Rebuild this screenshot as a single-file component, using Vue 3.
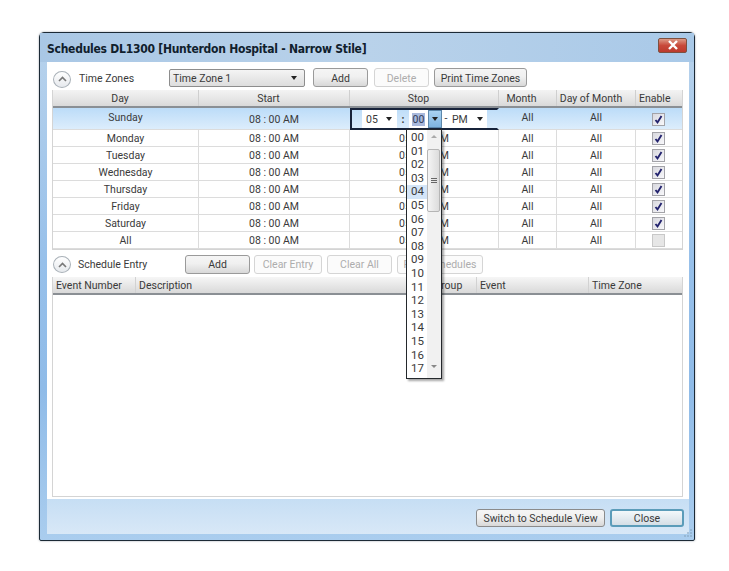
<script setup>
const rows = [
  { day: 'Sunday', on: true, active: true },
  { day: 'Monday', on: true },
  { day: 'Tuesday', on: true },
  { day: 'Wednesday', on: true },
  { day: 'Thursday', on: true },
  { day: 'Friday', on: true },
  { day: 'Saturday', on: true },
  { day: 'All', on: false },
]
const hours = Array.from({ length: 19 }, (_, i) => String(i).padStart(2, '0'))
</script>

<template>
  <div class="page">
    <section class="window">
      <header class="titlebar">
        <h1>Schedules DL1300 [Hunterdon Hospital - Narrow Stile]</h1>
        <button class="close-x" aria-label="Close">
          <svg width="12" height="10" viewBox="0 0 12 10"><path d="M2 1l8 8M10 1l-8 8" stroke="#fff" stroke-width="2.4" fill="none"/></svg>
        </button>
      </header>

      <div class="client">
        <main class="content">
          <div class="toolbar first-bar">
            <span class="expander first"><svg width="9" height="6" viewBox="0 0 9 6"><path d="M1 5l3.5-3.5L8 5" stroke="#777" stroke-width="1.6" fill="none"/></svg></span>
            <span class="section-label tz-label">Time Zones</span>
            <div class="select"><span>Time Zone 1</span><i class="arrow"></i></div>
            <button class="btn tz-add">Add</button>
            <button class="btn tz-delete" disabled>Delete</button>
            <button class="btn tz-print">Print Time Zones</button>
          </div>

          <div class="tz-table">
            <div class="tz-row tz-head">
              <div>Day</div><div>Start</div><div>Stop</div><div>Month</div><div>Day of Month</div><div>Enable</div>
            </div>
            <div v-for="r in rows" :key="r.day" class="tz-row" :class="{ active: r.active }">
              <div class="up">{{ r.day }}</div>
              <div class="time">08 : 00 AM</div>
              <div v-if="r.active" class="editor">
                <span class="ed-part ed-h">05 <i class="arrow"></i></span>
                <span class="ed-colon">:</span>
                <span class="ed-min"><b>00</b></span>
                <span class="ed-btn"><i class="arrow"></i></span>
                <span class="ed-dash">-</span>
                <span class="ed-part ed-pm">PM <i class="arrow"></i></span>
              </div>
              <div v-else class="time">05 : 00 PM</div>
              <div class="up">All</div>
              <div class="up">All</div>
              <div>
                <span class="check" :class="{ off: !r.on }">
                  <svg v-if="r.on" width="9" height="9" viewBox="0 0 9 9"><path d="M1.5 5l2 2.4L7.5 1" stroke="#23236e" stroke-width="1.9" fill="none"/></svg>
                </span>
              </div>
            </div>
          </div>

          <div class="toolbar entry-bar">
            <span class="expander"><svg width="9" height="6" viewBox="0 0 9 6"><path d="M1 5l3.5-3.5L8 5" stroke="#777" stroke-width="1.6" fill="none"/></svg></span>
            <span class="section-label se-label">Schedule Entry</span>
            <button class="btn se-add">Add</button>
            <button class="btn se-clear" disabled>Clear Entry</button>
            <button class="btn se-all" disabled>Clear All</button>
            <button class="btn se-print" disabled>Print Schedules</button>
          </div>

          <div class="events">
            <div class="ev-head">
              <div>Event Number</div><div>Description</div><div>Group</div><div>Event</div><div>Time Zone</div>
            </div>
          </div>

          <div class="popup">
            <ul>
              <li v-for="h in hours" :key="h" :class="{ hover: h === '04' }">{{ h }}</li>
            </ul>
            <div class="scroll">
              <i class="sc-up"></i>
              <div class="thumb"><span></span><span></span><span></span></div>
              <i class="sc-down"></i>
            </div>
          </div>
        </main>

        <footer class="footer">
          <button class="btn switch">Switch to Schedule View</button>
          <button class="btn close">Close</button>
          <svg class="grip" width="12" height="12" viewBox="0 0 12 12"><path d="M10 2v2M10 5v2M10 8v2M7 5v2M7 8v2M4 8v2" stroke="#8aa9c4" stroke-width="1.2" fill="none"/></svg>
        </footer>
      </div>
    </section>
  </div>
</template>

<style>
html, body { margin: 0; background: #fff; }
</style>

<style scoped>
* { box-sizing: border-box; }
.page {
  width: 729px;
  height: 571px;
  padding: 32px 0 0 39px;
  background: #fff;
  font: 10.5px Roboto, "Liberation Sans", Arial, sans-serif;
  color: #3a3a3a;
  overflow: hidden;
}
.window {
  width: 656px;
  height: 509px;
  border: 1px solid #1c2a36;
  border-radius: 5px 5px 2px 2px;
  background: linear-gradient(#b9d3ec, #97c0ea 45%, #8fbbe8 70%, #aacdee);
  display: flex;
  flex-direction: column;
  box-shadow: 0 0 2px rgba(40, 60, 80, .5);
}
.titlebar {
  height: 29px;
  flex: none;
  display: flex;
  align-items: center;
  justify-content: space-between;
  padding: 2px 7px 0 7px;
  background: linear-gradient(90deg, #a9c7e5, #b9d2ea 50%, #a9c9e8);
}
h1 {
  margin: 0;
  font: bold 12px "DejaVu Sans Condensed", "DejaVu Sans", sans-serif;
  font-stretch: condensed;
  color: #10202c;
  white-space: nowrap;
  letter-spacing: -.25px;
}
.close-x {
  width: 29px;
  height: 15px;
  margin-top: -7px;
  padding: 0;
  border: 1px solid #7d5040;
  border-radius: 2px;
  background: linear-gradient(#dd9a86, #c8493a 50%, #bc3a2c);
  display: flex;
  align-items: center;
  justify-content: center;
}
.client {
  flex: 1;
  margin: 0 5px 6px 7px;
  display: flex;
  flex-direction: column;
  min-height: 0;
}
.content {
  position: relative;
  height: 437px;
  flex: none;
  background: #fff;
  padding: 0 5px;
}
.toolbar {
  height: 28px;
  display: flex;
  align-items: center;
  padding-top: 3px;
}
.first-bar .btn, .first-bar .select { padding-top: 1px; }
.expander {
  width: 18px;
  height: 17px;
  flex: none;
  margin-left: 1px;
  border: 1px solid #a9b1b8;
  border-radius: 50%;
  background: linear-gradient(#fff, #e6e9ed);
  display: flex;
  align-items: center;
  justify-content: center;
}
.expander.first { margin-top: 3px; }
.section-label { color: #3a3a3a; white-space: nowrap; }
.tz-label { width: 90px; margin-left: 8px; padding-top: 1px; }
.se-label { width: 107px; margin-left: 7px; }
.select {
  width: 136px;
  height: 18px;
  border: 1px solid #8d8d8d;
  border-radius: 2px;
  background: linear-gradient(#f4f4f4, #ddd);
  padding: 0 7px 0 3px;
  display: flex;
  align-items: center;
  justify-content: space-between;
}
.arrow {
  display: inline-block;
  width: 0;
  height: 0;
  border-left: 3px solid transparent;
  border-right: 3px solid transparent;
  border-top: 4px solid #222;
  vertical-align: 1px;
}
.btn {
  height: 19px;
  padding: 0;
  border: 1px solid #9a9a9a;
  border-radius: 3px;
  background: linear-gradient(#f5f5f5, #f0f0f0 45%, #d8d8d8);
  font: inherit;
  color: #3a3a3a;
  white-space: nowrap;
  display: flex;
  align-items: center;
  justify-content: center;
}
.btn:disabled {
  border-color: #d5d5d5;
  background: #fbfbfb;
  color: #adadad;
}
.tz-add { width: 55px; margin-left: 8px; }
.tz-delete { width: 55px; margin-left: 6px; }
.tz-print { width: 93px; margin-left: 5px; }
.tz-table {
  width: 631px;
  border: 1px solid #d4d4d4;
  border-top: 0;
}
.tz-row {
  display: grid;
  grid-template-columns: 146px 151px 149px 58px 79px 47px;
  height: 17px;
  border-bottom: 1px solid #dcdcdc;
}
.tz-row > div {
  display: flex;
  align-items: center;
  justify-content: center;
  border-right: 1px solid #dcdcdc;
  white-space: nowrap;
  min-width: 0;
}
.tz-row > div:last-child { border-right: 0; }
.tz-head {
  height: 18px;
  background: linear-gradient(#f3f3f3, #e6e6e6 55%, #d9d9d9);
  border-bottom: 2px solid #8a8f94;
}
.tz-head > div { border-right-color: #cfcfcf; padding-top: 1px; }
.tz-head > div:nth-child(1),
.tz-head > div:nth-child(2),
.tz-head > div:nth-child(3) { padding-right: 11px; }
.tz-head > div:nth-child(4) { padding-right: 12px; }
.tz-head > div:nth-child(5) { padding-right: 10px; }
.tz-head > div:nth-child(6) { justify-content: flex-start; padding-left: 3px; }
.tz-row.active {
  height: 22px;
  background: linear-gradient(#bcdcf8, #dcedfc);
}
.tz-row.active > div { border-right-color: transparent; }
.tz-row.active .up { padding-bottom: 3px; }
.tz-row:not(.active) .time { padding-top: 1px; }
.tz-row > .editor {
  border: 2px solid #17233a;
  justify-content: flex-start;
  padding-left: 10px;
}
.ed-part {
  background: #fff;
  height: 18px;
  display: flex;
  align-items: center;
  gap: 8px;
}
.ed-h { width: 35px; padding-left: 4px; }
.ed-colon { width: 12px; text-align: center; font-weight: bold; }
.ed-min {
  width: 19px;
  height: 18px;
  background: #fff;
  display: flex;
  align-items: center;
  justify-content: center;
}
.ed-min b { font-weight: 400; background: #a9b9dc; color: #2f3b58; padding: 0 1px; line-height: 13px; }
.ed-btn {
  width: 14px;
  height: 18px;
  background: linear-gradient(#a9d2f2, #7fb4e0);
  border: 1px solid #5d88ab;
  display: flex;
  align-items: center;
  justify-content: center;
}
.ed-dash { width: 8px; text-align: center; background: #fff; height: 18px; line-height: 18px; }
.ed-pm { width: 37px; padding-left: 2px; gap: 9px; }
.check {
  width: 13px;
  height: 13px;
  margin-right: 2px;
  border: 1px solid #a3a3a8;
  background: linear-gradient(135deg, #d8d8de, #f8f8fb);
  display: flex;
  align-items: center;
  justify-content: center;
}
.check.off { background: #e6e6e6; border-color: #c8c8c8; }
.entry-bar { height: 27px; padding-top: 2px; }
.se-add { width: 65px; }
.se-clear { width: 68px; margin-left: 4px; }
.se-all { width: 65px; margin-left: 5px; }
.se-print { width: 86px; margin-left: 5px; }
.events {
  width: 631px;
  height: 220px;
  border: 1px solid #d4d4d4;
  border-top: 0;
}
.ev-head {
  display: grid;
  grid-template-columns: 83px 295px 46px 112px 1fr;
  height: 18px;
  background: linear-gradient(#f6f6f6, #e6e6e6 55%, #d9d9d9);
  border-bottom: 2px solid #8a8f94;
}
.ev-head > div {
  padding: 1px 0 0 3px;
  display: flex;
  align-items: center;
  white-space: nowrap;
  border-right: 1px solid #d2d2d2;
}
.ev-head > div:last-child { border-right: 0; }
.popup {
  position: absolute;
  left: 359px;
  top: 67px;
  width: 36px;
  height: 250px;
  background: #fff;
  border: 1px solid #24282c;
  box-shadow: 2px 2px 2px rgba(0, 0, 0, .35);
  display: flex;
  overflow: hidden;
}
ul {
  width: 20px;
  height: 248px;
  margin: 0;
  padding: 1px 0 0 0;
  list-style: none;
  flex: none;
  overflow: hidden;
}
li {
  height: 13.6px;
  font: 11.5px/13.6px Roboto, "Liberation Sans", Arial, sans-serif;
  padding-left: 4px;
  color: #3a3a3a;
}
li.hover { background: #d4e5f8; }
.scroll {
  flex: 1;
  background: #f1f1f1;
  position: relative;
}
.sc-up, .sc-down {
  position: absolute;
  left: 4px;
  width: 0;
  height: 0;
  border-left: 3px solid transparent;
  border-right: 3px solid transparent;
}
.sc-up { top: 5px; border-bottom: 3px solid #aaa; }
.sc-down { bottom: 10px; border-top: 3px solid #888; }
.thumb {
  position: absolute;
  top: 19px;
  left: 0;
  width: 13px;
  height: 63px;
  border: 1px solid #b5b5b5;
  border-radius: 2px;
  background: linear-gradient(90deg, #f4f4f4, #dcdcdc);
  display: flex;
  flex-direction: column;
  align-items: center;
  justify-content: center;
  gap: 1px;
}
.thumb span { width: 6px; height: 1px; background: #666; }
.footer {
  position: relative;
  flex: 1;
  background: linear-gradient(#c6def4, #d8e8f7);
  display: flex;
  justify-content: flex-end;
  align-items: center;
  gap: 5px;
  padding: 3px 5px 0 0;
}
.switch { width: 129px; height: 18px; border-color: #8b8b8b; }
.close {
  width: 74px;
  height: 18px;
  border: 2px solid #5b9cb9;
  background: linear-gradient(#f3f8fb, #d4dee6);
}
.grip { position: absolute; right: -4px; bottom: -5px; }
</style>
